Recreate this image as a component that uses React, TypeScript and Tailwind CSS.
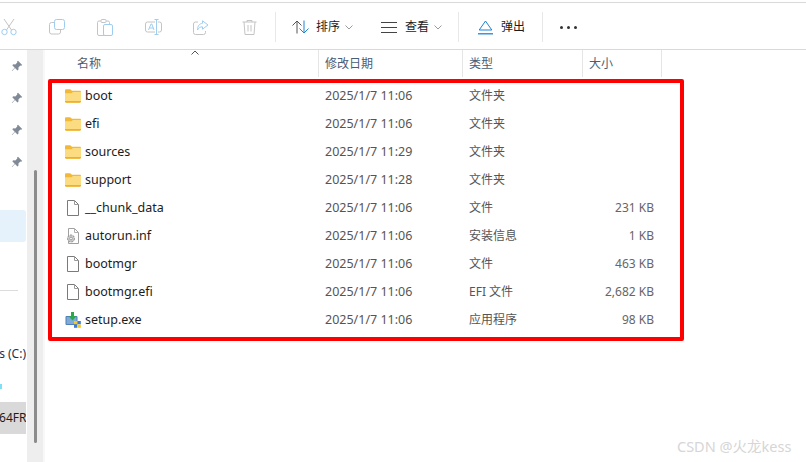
import React from 'react';

const FONT = 'font-["Noto_Sans","Noto_Sans_CJK_SC",sans-serif]';

interface FileRow {
  name: string;
  date: string;
  type: string;
  size?: string;
  icon: 'folder' | 'file' | 'inf' | 'exe';
}

const rows: FileRow[] = [
  { name: 'boot', date: '2025/1/7 11:06', type: '文件夹', icon: 'folder' },
  { name: 'efi', date: '2025/1/7 11:06', type: '文件夹', icon: 'folder' },
  { name: 'sources', date: '2025/1/7 11:29', type: '文件夹', icon: 'folder' },
  { name: 'support', date: '2025/1/7 11:28', type: '文件夹', icon: 'folder' },
  { name: '__chunk_data', date: '2025/1/7 11:06', type: '文件', size: '231 KB', icon: 'file' },
  { name: 'autorun.inf', date: '2025/1/7 11:06', type: '安装信息', size: '1 KB', icon: 'inf' },
  { name: 'bootmgr', date: '2025/1/7 11:06', type: '文件', size: '463 KB', icon: 'file' },
  { name: 'bootmgr.efi', date: '2025/1/7 11:06', type: 'EFI 文件', size: '2,682 KB', icon: 'file' },
  { name: 'setup.exe', date: '2025/1/7 11:06', type: '应用程序', size: '98 KB', icon: 'exe' },
];

const FolderIcon = () => (
  <svg width="16" height="14" viewBox="0 0 16 14">
    <path d="M0 1.500C0 .8.500.300 1.200.300h4L7 1.800h7.800c.7 0 1.200.5 1.200 1.200v2H0z" fill="#f0b93a" />
    <path d="M0 4.200h6.500L8 3h8v9.500c0 .7-.5 1.200-1.200 1.200H1.200C.5 13.700 0 13.200 0 12.500z" fill="#fbdc80" />
    <path d="M0 12h16v.6c0 .7-.5 1.200-1.200 1.200H1.200C.5 13.800 0 13.300 0 12.600z" fill="#eeb030" />
  </svg>
);

const FileIcon = () => (
  <svg width="16" height="18" viewBox="0 0 16 18" fill="none">
    <path d="M2.500 1.500h7l4 4v11h-11z" fill="#fff" stroke="#7a7a7a" />
    <path d="M9.500 1.500v4h4" stroke="#9a9a9a" />
  </svg>
);

const InfIcon = () => (
  <svg width="16" height="18" viewBox="0 0 16 18" fill="none">
    <path d="M3.500 1.500h6l4 4v11h-10z" fill="#fff" stroke="#a0a0a0" />
    <path d="M9.500 1.500v4h4" stroke="#b0b0b0" />
    <circle cx="6" cy="11.500" r="3.500" fill="#c9c9c9" stroke="#8a8a8a" strokeDasharray="2 1" />
    <circle cx="6" cy="11.500" r="1.300" fill="#fff" stroke="#8a8a8a" strokeWidth="0.700" />
  </svg>
);

const ExeIcon = () => (
  <svg width="16" height="16" viewBox="0 0 16 16">
    <rect x="0.500" y="4" width="12" height="9" rx="1" fill="#4f7fb8" />
    <rect x="1.500" y="5" width="10" height="7" fill="#7eaad8" />
    <path d="M6 0h3v4h2.500L7.500 8.500 3.500 4H6z" fill="#2ba84a" />
    <rect x="9" y="9" width="3.300" height="3.300" fill="#f6c624" />
    <rect x="12.500" y="9" width="3.300" height="3.300" fill="#3a7bd5" />
    <rect x="9" y="12.500" width="3.300" height="3.300" fill="#3a7bd5" />
    <rect x="12.500" y="12.500" width="3.300" height="3.300" fill="#f6c624" />
  </svg>
);

const fileIcon = (icon: FileRow['icon']) => {
  switch (icon) {
    case 'folder': return <FolderIcon />;
    case 'inf': return <InfIcon />;
    case 'exe': return <ExeIcon />;
    default: return <FileIcon />;
  }
};

const PinIcon = () => (
  <svg width="12" height="12" viewBox="0 0 12 12" fill="#7f8a96">
    <path d="M7 .8l4.200 4.200-1 .8-.8-.3-2 2 .1 2-1 1L4 8 1.200 11 .8 10.800 3.700 7.700 1.300 5.300l1-1 2 .1 2-2-.2-.8z" />
  </svg>
);

const Separator = () => <div className="w-px h-[30px] bg-[#e8e8e8]" />;

const Chevron = () => (
  <svg width="8" height="5" viewBox="0 0 8 5" fill="none" stroke="#9a9a9a">
    <path d="M.5.500 4 4 7.500.500" />
  </svg>
);

// greyed out actions at the left of the command bar
const disabledIcons = [
  <svg key="cut" width="16" height="18" viewBox="0 0 16 18" fill="none" stroke="#c4c4c4">
    <path d="M3 1l7.500 11M13 1 5.500 12" />
    <circle cx="3.500" cy="14" r="2.700" stroke="#9fcdf0" />
    <circle cx="12.500" cy="14" r="2.700" stroke="#9fcdf0" />
  </svg>,
  <svg key="copy" width="16" height="16" viewBox="0 0 16 16" fill="none">
    <rect x="0.500" y="3.500" width="11" height="11.500" rx="2" stroke="#c4c4c4" />
    <rect x="5.500" y="0.500" width="10" height="10" rx="2" fill="#fff" stroke="#9fcdf0" />
  </svg>,
  <svg key="paste" width="16" height="17" viewBox="0 0 16 17" fill="none">
    <rect x="0.500" y="2" width="12" height="14.500" rx="1.500" stroke="#c4c4c4" />
    <rect x="4" y="0.500" width="5" height="3" rx="1" fill="#fff" stroke="#c4c4c4" />
    <rect x="6.500" y="5.500" width="9" height="11" rx="1.500" fill="#fff" stroke="#9fcdf0" />
  </svg>,
  <svg key="rename" width="17" height="16" viewBox="0 0 17 16" fill="none" stroke="#c4c4c4">
    <path d="M10 3H2.500a2 2 0 0 0-2 2v6a2 2 0 0 0 2 2H10M13 3h1.500a2 2 0 0 1 2 2v6a2 2 0 0 1-2 2H13" />
    <path d="M11.500 1v14M9.500.500h4M9.500 15.500h4" stroke="#9fcdf0" />
    <path d="M3.500 11 6 5h.8L9 11M4.500 9h3.800" stroke="#9fcdf0" />
  </svg>,
  <svg key="share" width="16" height="15" viewBox="0 0 16 15" fill="none">
    <path d="M5 2H2.500a2 2 0 0 0-2 2v8.500a2 2 0 0 0 2 2h8a2 2 0 0 0 2-2V11" stroke="#c4c4c4" />
    <path d="M9.500.800l5.500 4.200-5.500 4.200V6.800C7 6.800 5.500 8 4.500 10c0-4 2-6.500 5-6.700z" fill="#fff" stroke="#9fcdf0" />
  </svg>,
  <svg key="delete" width="15" height="16" viewBox="0 0 15 16" fill="none" stroke="#c4c4c4">
    <path d="M.5 3h14M5 3V1.500h5V3M2 3l1 12.500h9L13 3M6 6v6.500M9 6v6.500" />
  </svg>,
];

export default function App() {
  return (
    <div className={`${FONT} relative w-[806px] h-[462px] overflow-hidden bg-white text-xs text-[#1c1c1c]`}>
      <div className="h-[2px]" />
      {/* command bar */}
      <div className="h-[48px] border-y border-[#d9d9d9] flex items-center pt-[2px]">
        <div className="flex items-center -ml-[15px]">
          {disabledIcons.map(icon => (
            <div key={icon.key} className="w-[48px] flex justify-center">{icon}</div>
          ))}
        </div>
        <div className="ml-[2px]"><Separator /></div>
        <div className="ml-[16px] flex items-center">
          <svg width="17" height="14" viewBox="0 0 17 14" fill="none">
            <path d="M5 13.500V1M.5 5.500 5 1l4.500 4.500" stroke="#555" />
            <path d="M12 .5V13M7.500 8.500 12 13l4.500-4.500" stroke="#1d83d4" />
          </svg>
          <span className="ml-[7px] text-[12px]">排序</span>
          <div className="ml-[5px]"><Chevron /></div>
        </div>
        <div className="ml-[28px] flex items-center">
          <svg width="16" height="11" viewBox="0 0 16 11" stroke="#444">
            <path d="M0 .5h16M0 5.500h16M0 10.500h16" />
          </svg>
          <span className="ml-[8px] text-[12px]">查看</span>
          <div className="ml-[5px]"><Chevron /></div>
        </div>
        <div className="ml-[16px]"><Separator /></div>
        <div className="ml-[19px] flex items-center">
          <svg width="15" height="15" viewBox="0 0 15 15" fill="none" stroke="#1d83d4">
            <path d="M7.500 1 1.200 10h12.600z" />
            <path d="M0 13.800h15" strokeWidth="1.300" />
          </svg>
          <span className="ml-[8px] text-[12px]">弹出</span>
        </div>
        <div className="ml-[17px]"><Separator /></div>
        <div className="ml-[17px] flex gap-[4px]">
          <div className="w-[3px] h-[3px] rounded-full bg-[#333]" />
          <div className="w-[3px] h-[3px] rounded-full bg-[#333]" />
          <div className="w-[3px] h-[3px] rounded-full bg-[#333]" />
        </div>
      </div>

      <div className="flex h-[412px]">
        {/* nav pane, scrolled so only the tail of it shows */}
        <div className="w-[27px] pr-px overflow-hidden shrink-0">
          {[0, 1, 2, 3].map(i => (
            <div key={i} className="h-8 flex items-center pl-[11px]"><PinIcon /></div>
          ))}
          <div className="h-8" />
          <div className="h-8 bg-[#e5f1fb] rounded-r-[3px]" />
          <div className="h-8" />
          <div className="h-8 flex items-center"><div className="w-[18px] h-px bg-[#dcdcdc]" /></div>
          <div className="h-8" />
          <div className="h-8 flex items-center justify-end whitespace-nowrap text-[#1f2f4a]">s (C:)</div>
          <div className="h-8 flex items-center"><div className="w-[2px] h-[5px] bg-[#7fe0f5]" /></div>
          <div className="h-8 bg-[#d9d9d9] flex items-center whitespace-nowrap overflow-hidden">
            <span className="-ml-[8px]">X64FRE</span>
          </div>
        </div>
        <div className="w-4 shrink-0 bg-[#eeeeee] pt-[120px] flex justify-center">
          <div className="w-[3px] h-[273px] bg-[#8c8c8c] rounded-full" />
        </div>
        <div className="w-[2px] shrink-0 bg-[#f8f8f8]" />

        {/* file list */}
        <div className="flex-1">
          <div className="h-[27px] flex items-center text-[#4a5d75]">
            <div className="w-[273px] pl-[32px]">名称</div>
            <div className="w-[144px] h-full flex items-center pl-[6px] border-l border-[#e5e5e5]">修改日期</div>
            <div className="w-[120px] h-full flex items-center pl-[6px] border-l border-[#e5e5e5]">类型</div>
            <div className="w-[80px] h-full flex items-center pl-[6px] border-x border-[#e5e5e5]">大小</div>
          </div>
          <div className="mt-[5px]">
            {rows.map(row => (
              <div key={row.name} className="h-7 flex items-center">
                <div className="w-[273px] pl-[20px] flex items-center gap-[4px]">
                  <div className="w-4 flex justify-center">{fileIcon(row.icon)}</div>
                  <span className="text-[#1c1c1c] text-[12.5px]">{row.name}</span>
                </div>
                <div className="w-[144px] pl-[7px] text-[12.5px] text-[#555]">{row.date}</div>
                <div className="w-[120px] pl-[7px] text-[#555]">{row.type}</div>
                <div className="w-[80px] pr-[8px] text-right text-[#666]">{row.size}</div>
              </div>
            ))}
          </div>
        </div>
      </div>

      {/* column sort caret */}
      <svg className="absolute left-[191px] top-[50px]" width="8" height="5" viewBox="0 0 8 5" fill="none" stroke="#555">
        <path d="M.5 4.500 4 1l3.500 3.500" />
      </svg>

      {/* red annotation drawn over the list */}
      <div className="absolute left-[48px] top-[79px] w-[636px] h-[262px] border-4 border-[#ff0000] rounded-[2px]" />

      {/* watermark */}
      <div className="absolute left-[677px] top-[436px] text-[14.5px] leading-[20px] text-[#d6d6d6] whitespace-nowrap">
        CSDN @火龙kess
      </div>
    </div>
  );
}
